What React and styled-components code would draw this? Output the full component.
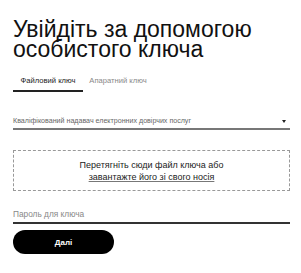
import React from 'react';
import styled, {createGlobalStyle} from 'styled-components';

const GlobalStyle = createGlobalStyle`
  html, body {
    margin: 0;
    padding: 0;
    background: #fff;
  }
  body {
    font-family: "Liberation Sans", Arial, sans-serif;
    color: #000;
  }
`;

const StyledWrapper = styled.div`
  width: 301px;
  padding: 19px 11px 0 13px;
  box-sizing: border-box;
`;

const StyledTitle = styled.h1`
  margin: 0;
  font-size: 23px;
  font-weight: 400;
  line-height: 20px;
  color: #111;
`;

const StyledTabs = styled.div`
  display: flex;
  margin-top: 14px;
`;

const StyledTab = styled.div`
  width: ${props => props.width};
  padding: 3px 0 5px;
  text-align: center;
  font-size: 7.6px;
  color: ${props => (props.active ? '#222' : '#888')};
  border-bottom: 2px solid ${props => (props.active ? '#222' : 'transparent')};
`;

const StyledSelect = styled.div`
  display: flex;
  align-items: center;
  justify-content: space-between;
  margin-top: 25px;
  padding: 0 4px 3px 0;
  border-bottom: 2px solid #777;
  font-size: 7.1px;
  color: #666;
`;

const StyledArrow = styled.span`
  width: 0;
  height: 0;
  border-left: 2.5px solid transparent;
  border-right: 2.5px solid transparent;
  border-top: 3px solid #222;
`;

const StyledDropzone = styled.div`
  margin-top: 20px;
  height: 39px;
  border: 1px dashed #999;
  display: flex;
  flex-direction: column;
  align-items: center;
  justify-content: center;
  font-size: 9px;
  line-height: 12px;
  color: #222;
`;

const StyledUpload = styled.span`
  text-decoration: underline;
  text-decoration-color: #777;
`;

const StyledPassword = styled.div`
  margin-top: 18px;
  padding-bottom: 3px;
  border-bottom: 2px solid #333;
  font-size: 8.3px;
  color: #888;
`;

const StyledButton = styled.button`
  display: block;
  margin-top: 6px;
  width: 101px;
  height: 24px;
  border: 0;
  border-radius: 12px;
  background: #000;
  color: #fff;
  font-family: inherit;
  font-size: 8px;
  font-weight: 700;
`;

const App = () => (
  <StyledWrapper>
    <GlobalStyle />
    <StyledTitle>Увійдіть за допомогою особистого ключа</StyledTitle>
    <StyledTabs>
      <StyledTab active width='70px'>Файловий ключ</StyledTab>
      <StyledTab width='70px'>Апаратний ключ</StyledTab>
    </StyledTabs>
    <StyledSelect>
      Кваліфікований надавач електронних довірчих послуг
      <StyledArrow />
    </StyledSelect>
    <StyledDropzone>
      <span>Перетягніть сюди файл ключа або</span>
      <StyledUpload>завантажте його зі свого носія</StyledUpload>
    </StyledDropzone>
    <StyledPassword>Пароль для ключа</StyledPassword>
    <StyledButton>Далі</StyledButton>
  </StyledWrapper>
);

export default App;
